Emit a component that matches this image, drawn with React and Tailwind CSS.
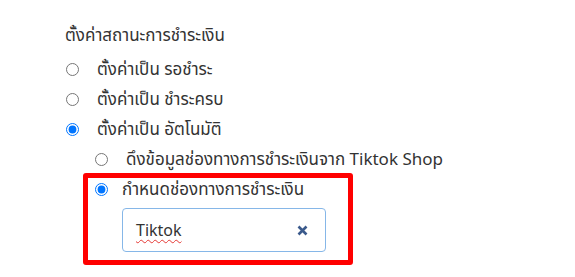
import React from 'react';

const FONT = { fontFamily: '"Noto Sans", "Noto Sans Thai", "Leelawadee UI", Tahoma, sans-serif' };

function Radio({ checked }) {
  return (
    <input
      type="radio"
      readOnly
      checked={checked}
      className="m-0 h-[13px] w-[13px] shrink-0 accent-[#0075ff]"
    />
  );
}

function Option({ checked, label }) {
  return (
    <div className="flex h-[30px] items-center">
      <Radio checked={checked} />
      <span className="ml-[18px] whitespace-nowrap">{label}</span>
    </div>
  );
}

export default function App() {
  return (
    <div className="min-h-[277px] bg-white pl-[65px] pt-[23px] text-[17px] text-[#333]" style={FONT}>
      <div className="h-[24px] leading-[24px]">ตั้งค่าสถานะการชำระเงิน</div>

      <div className="mt-[7px] pl-[1px]">
        <Option checked={false} label="ตั้งค่าเป็น รอชำระ" />
        <Option checked={false} label="ตั้งค่าเป็น ชำระครบ" />
        <Option checked label="ตั้งค่าเป็น อัตโนมัติ" />

        <div className="pl-[29px]">
          <Option checked={false} label="ดึงข้อมูลช่องทางการชำระเงินจาก Tiktok Shop" />

          <div className="-ml-[12px] -mt-[1px] w-[270px] rounded-[3px] border-[5px] border-[#ff0000] pb-[8px] pl-[7px]">
            <div className="flex h-[22px] items-center">
              <Radio checked />
              <span className="ml-[14px] whitespace-nowrap">กำหนดช่องทางการชำระเงิน</span>
            </div>
            <div className="ml-[27px] mt-[8px] flex h-[44px] w-[204px] items-center justify-between rounded-[4px] border border-[#86b7e8] pl-[13px] pr-[17px]">
              <span className="text-[16px] underline decoration-[#e53935] decoration-wavy decoration-1 underline-offset-[3px]">Tiktok</span>
              <svg width="11" height="11" viewBox="0 0 11 11">
                <path d="M1.5 1.5 L9.5 9.5 M9.5 1.5 L1.5 9.5" stroke="#3b5a8c" strokeWidth="2.6" strokeLinecap="butt" />
              </svg>
            </div>
          </div>
        </div>
      </div>
    </div>
  );
}
